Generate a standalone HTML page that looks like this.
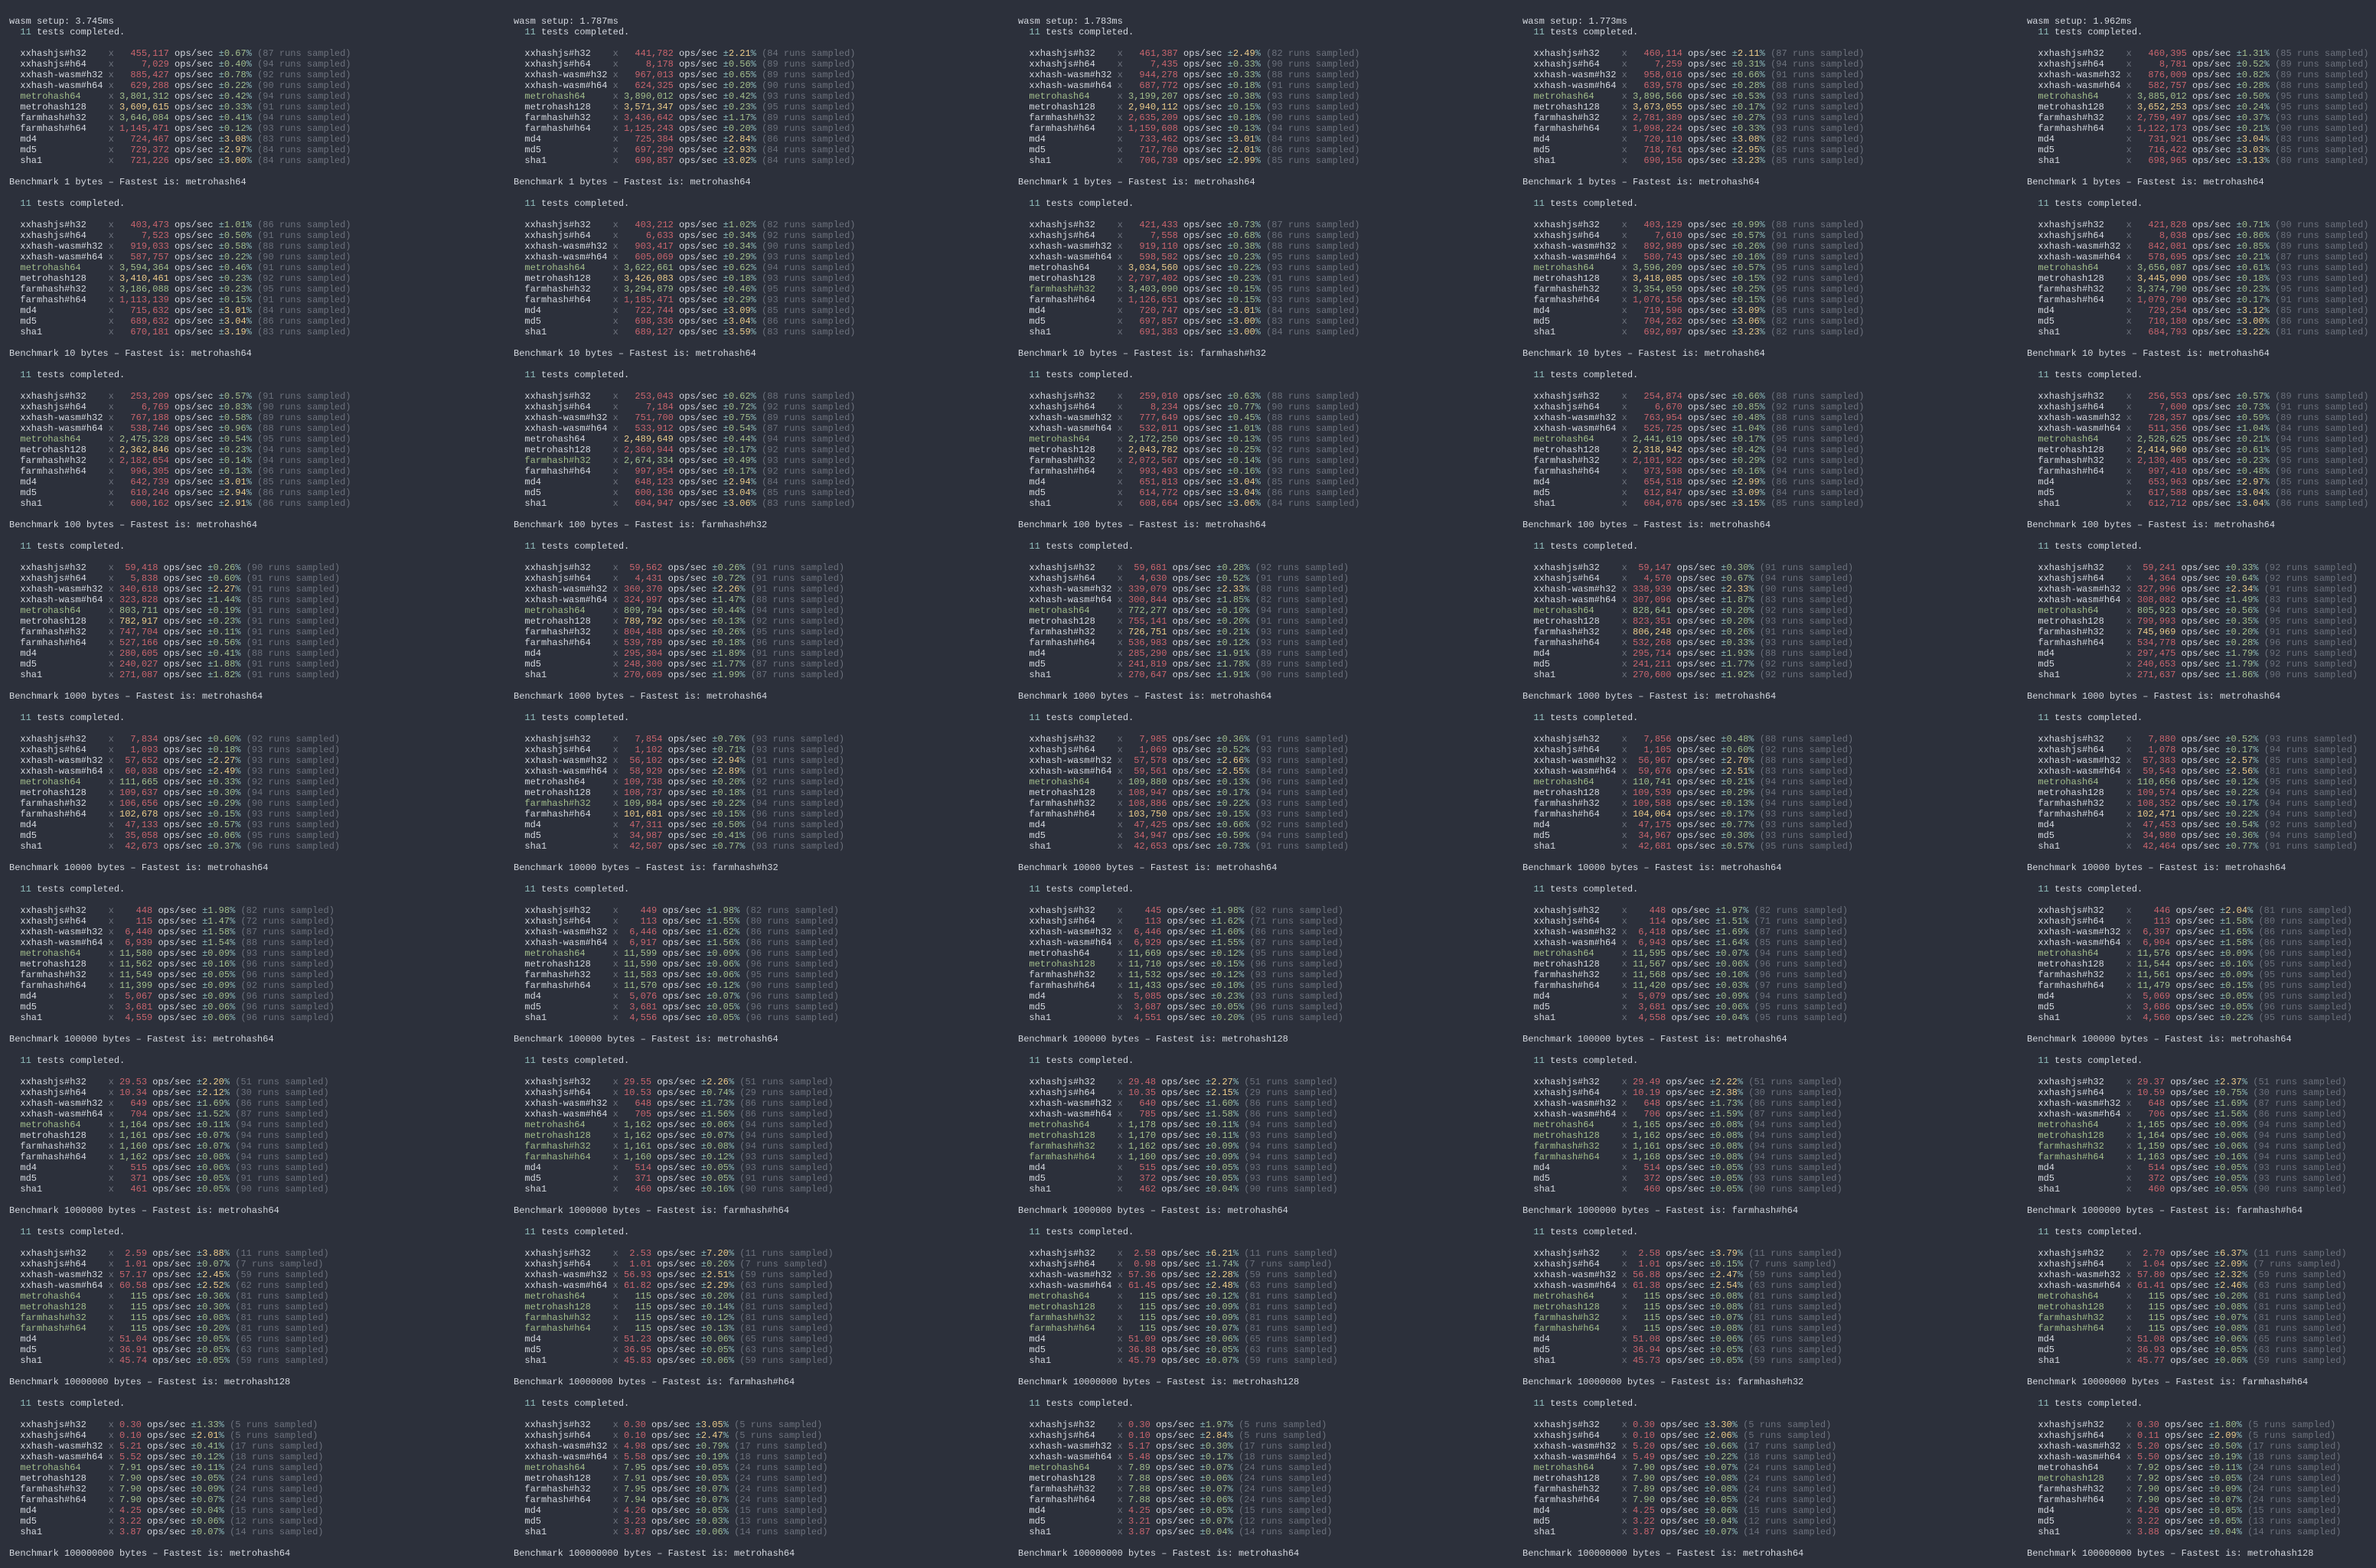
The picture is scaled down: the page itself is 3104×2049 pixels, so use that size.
<!DOCTYPE html>
<html><head><meta charset="utf-8"><style>
html,body{margin:0;padding:0;background:#2c303b;width:3104px;height:2049px;overflow:hidden}
pre{position:absolute;top:21px;margin:0;font:12px/14px "Liberation Mono",monospace;color:#d4d8df;white-space:pre}
i{font-style:normal;color:#6c717c}
u{text-decoration:none;color:#88b4b8}
r{color:#c8646d}
g{color:#a3be8c}
y{color:#ebcb8b}
c{color:#8fbcbb}
</style></head><body>
<pre style="left:12px">wasm setup: 3.745ms
  <c>11</c> tests completed.

  xxhashjs#h32    <i>x</i> <r>  455,117</r> ops/sec <u>±</u><g>0.67</g><u>%</u> <i>(87 runs sampled)</i>
  xxhashjs#h64    <i>x</i> <r>    7,029</r> ops/sec <u>±</u><g>0.40</g><u>%</u> <i>(94 runs sampled)</i>
  xxhash-wasm#h32 <i>x</i> <r>  885,427</r> ops/sec <u>±</u><g>0.78</g><u>%</u> <i>(92 runs sampled)</i>
  xxhash-wasm#h64 <i>x</i> <r>  629,288</r> ops/sec <u>±</u><g>0.22</g><u>%</u> <i>(90 runs sampled)</i>
  <g>metrohash64</g>     <i>x</i> <g>3,801,312</g> ops/sec <u>±</u><g>0.42</g><u>%</u> <i>(94 runs sampled)</i>
  metrohash128    <i>x</i> <y>3,609,615</y> ops/sec <u>±</u><g>0.33</g><u>%</u> <i>(91 runs sampled)</i>
  farmhash#h32    <i>x</i> <g>3,646,084</g> ops/sec <u>±</u><g>0.41</g><u>%</u> <i>(94 runs sampled)</i>
  farmhash#h64    <i>x</i> <r>1,145,471</r> ops/sec <u>±</u><g>0.12</g><u>%</u> <i>(93 runs sampled)</i>
  md4             <i>x</i> <r>  724,467</r> ops/sec <u>±</u><y>3.08</y><u>%</u> <i>(83 runs sampled)</i>
  md5             <i>x</i> <r>  729,372</r> ops/sec <u>±</u><y>2.97</y><u>%</u> <i>(84 runs sampled)</i>
  sha1            <i>x</i> <r>  721,226</r> ops/sec <u>±</u><y>3.00</y><u>%</u> <i>(84 runs sampled)</i>

Benchmark 1 bytes – Fastest is: metrohash64

  <c>11</c> tests completed.

  xxhashjs#h32    <i>x</i> <r>  403,473</r> ops/sec <u>±</u><g>1.01</g><u>%</u> <i>(86 runs sampled)</i>
  xxhashjs#h64    <i>x</i> <r>    7,523</r> ops/sec <u>±</u><g>0.50</g><u>%</u> <i>(91 runs sampled)</i>
  xxhash-wasm#h32 <i>x</i> <r>  919,033</r> ops/sec <u>±</u><g>0.58</g><u>%</u> <i>(88 runs sampled)</i>
  xxhash-wasm#h64 <i>x</i> <r>  587,757</r> ops/sec <u>±</u><g>0.22</g><u>%</u> <i>(90 runs sampled)</i>
  <g>metrohash64</g>     <i>x</i> <g>3,594,364</g> ops/sec <u>±</u><g>0.46</g><u>%</u> <i>(91 runs sampled)</i>
  metrohash128    <i>x</i> <y>3,410,461</y> ops/sec <u>±</u><g>0.23</g><u>%</u> <i>(92 runs sampled)</i>
  farmhash#h32    <i>x</i> <g>3,186,088</g> ops/sec <u>±</u><g>0.23</g><u>%</u> <i>(95 runs sampled)</i>
  farmhash#h64    <i>x</i> <r>1,113,139</r> ops/sec <u>±</u><g>0.15</g><u>%</u> <i>(91 runs sampled)</i>
  md4             <i>x</i> <r>  715,632</r> ops/sec <u>±</u><y>3.01</y><u>%</u> <i>(84 runs sampled)</i>
  md5             <i>x</i> <r>  689,632</r> ops/sec <u>±</u><y>3.04</y><u>%</u> <i>(86 runs sampled)</i>
  sha1            <i>x</i> <r>  670,181</r> ops/sec <u>±</u><y>3.19</y><u>%</u> <i>(83 runs sampled)</i>

Benchmark 10 bytes – Fastest is: metrohash64

  <c>11</c> tests completed.

  xxhashjs#h32    <i>x</i> <r>  253,209</r> ops/sec <u>±</u><g>0.57</g><u>%</u> <i>(91 runs sampled)</i>
  xxhashjs#h64    <i>x</i> <r>    6,769</r> ops/sec <u>±</u><g>0.83</g><u>%</u> <i>(90 runs sampled)</i>
  xxhash-wasm#h32 <i>x</i> <r>  767,188</r> ops/sec <u>±</u><g>0.58</g><u>%</u> <i>(89 runs sampled)</i>
  xxhash-wasm#h64 <i>x</i> <r>  538,746</r> ops/sec <u>±</u><g>0.96</g><u>%</u> <i>(88 runs sampled)</i>
  <g>metrohash64</g>     <i>x</i> <g>2,475,328</g> ops/sec <u>±</u><g>0.54</g><u>%</u> <i>(95 runs sampled)</i>
  metrohash128    <i>x</i> <y>2,362,846</y> ops/sec <u>±</u><g>0.23</g><u>%</u> <i>(94 runs sampled)</i>
  farmhash#h32    <i>x</i> <r>2,182,654</r> ops/sec <u>±</u><g>0.14</g><u>%</u> <i>(94 runs sampled)</i>
  farmhash#h64    <i>x</i> <r>  996,305</r> ops/sec <u>±</u><g>0.13</g><u>%</u> <i>(96 runs sampled)</i>
  md4             <i>x</i> <r>  642,739</r> ops/sec <u>±</u><y>3.01</y><u>%</u> <i>(85 runs sampled)</i>
  md5             <i>x</i> <r>  610,246</r> ops/sec <u>±</u><y>2.94</y><u>%</u> <i>(86 runs sampled)</i>
  sha1            <i>x</i> <r>  600,162</r> ops/sec <u>±</u><y>2.91</y><u>%</u> <i>(86 runs sampled)</i>

Benchmark 100 bytes – Fastest is: metrohash64

  <c>11</c> tests completed.

  xxhashjs#h32    <i>x</i> <r> 59,418</r> ops/sec <u>±</u><g>0.26</g><u>%</u> <i>(90 runs sampled)</i>
  xxhashjs#h64    <i>x</i> <r>  5,838</r> ops/sec <u>±</u><g>0.60</g><u>%</u> <i>(91 runs sampled)</i>
  xxhash-wasm#h32 <i>x</i> <r>340,618</r> ops/sec <u>±</u><y>2.27</y><u>%</u> <i>(91 runs sampled)</i>
  xxhash-wasm#h64 <i>x</i> <r>323,828</r> ops/sec <u>±</u><g>1.44</g><u>%</u> <i>(85 runs sampled)</i>
  <g>metrohash64</g>     <i>x</i> <g>803,711</g> ops/sec <u>±</u><g>0.19</g><u>%</u> <i>(91 runs sampled)</i>
  metrohash128    <i>x</i> <y>782,917</y> ops/sec <u>±</u><g>0.23</g><u>%</u> <i>(91 runs sampled)</i>
  farmhash#h32    <i>x</i> <r>747,704</r> ops/sec <u>±</u><g>0.11</g><u>%</u> <i>(91 runs sampled)</i>
  farmhash#h64    <i>x</i> <r>527,166</r> ops/sec <u>±</u><g>0.56</g><u>%</u> <i>(91 runs sampled)</i>
  md4             <i>x</i> <r>280,605</r> ops/sec <u>±</u><g>0.41</g><u>%</u> <i>(88 runs sampled)</i>
  md5             <i>x</i> <r>240,027</r> ops/sec <u>±</u><g>1.88</g><u>%</u> <i>(91 runs sampled)</i>
  sha1            <i>x</i> <r>271,087</r> ops/sec <u>±</u><g>1.82</g><u>%</u> <i>(91 runs sampled)</i>

Benchmark 1000 bytes – Fastest is: metrohash64

  <c>11</c> tests completed.

  xxhashjs#h32    <i>x</i> <r>  7,834</r> ops/sec <u>±</u><g>0.60</g><u>%</u> <i>(92 runs sampled)</i>
  xxhashjs#h64    <i>x</i> <r>  1,093</r> ops/sec <u>±</u><g>0.18</g><u>%</u> <i>(93 runs sampled)</i>
  xxhash-wasm#h32 <i>x</i> <r> 57,652</r> ops/sec <u>±</u><y>2.27</y><u>%</u> <i>(93 runs sampled)</i>
  xxhash-wasm#h64 <i>x</i> <r> 60,038</r> ops/sec <u>±</u><y>2.49</y><u>%</u> <i>(93 runs sampled)</i>
  <g>metrohash64</g>     <i>x</i> <g>111,665</g> ops/sec <u>±</u><g>0.33</g><u>%</u> <i>(92 runs sampled)</i>
  metrohash128    <i>x</i> <r>109,637</r> ops/sec <u>±</u><g>0.30</g><u>%</u> <i>(94 runs sampled)</i>
  farmhash#h32    <i>x</i> <r>106,656</r> ops/sec <u>±</u><g>0.29</g><u>%</u> <i>(90 runs sampled)</i>
  farmhash#h64    <i>x</i> <y>102,678</y> ops/sec <u>±</u><g>0.15</g><u>%</u> <i>(93 runs sampled)</i>
  md4             <i>x</i> <r> 47,133</r> ops/sec <u>±</u><g>0.57</g><u>%</u> <i>(93 runs sampled)</i>
  md5             <i>x</i> <r> 35,058</r> ops/sec <u>±</u><g>0.06</g><u>%</u> <i>(95 runs sampled)</i>
  sha1            <i>x</i> <r> 42,673</r> ops/sec <u>±</u><g>0.37</g><u>%</u> <i>(96 runs sampled)</i>

Benchmark 10000 bytes – Fastest is: metrohash64

  <c>11</c> tests completed.

  xxhashjs#h32    <i>x</i> <r>   448</r> ops/sec <u>±</u><g>1.98</g><u>%</u> <i>(82 runs sampled)</i>
  xxhashjs#h64    <i>x</i> <r>   115</r> ops/sec <u>±</u><g>1.47</g><u>%</u> <i>(72 runs sampled)</i>
  xxhash-wasm#h32 <i>x</i> <r> 6,440</r> ops/sec <u>±</u><g>1.58</g><u>%</u> <i>(87 runs sampled)</i>
  xxhash-wasm#h64 <i>x</i> <r> 6,939</r> ops/sec <u>±</u><g>1.54</g><u>%</u> <i>(88 runs sampled)</i>
  <g>metrohash64</g>     <i>x</i> <g>11,580</g> ops/sec <u>±</u><g>0.09</g><u>%</u> <i>(93 runs sampled)</i>
  metrohash128    <i>x</i> <g>11,562</g> ops/sec <u>±</u><g>0.16</g><u>%</u> <i>(96 runs sampled)</i>
  farmhash#h32    <i>x</i> <g>11,549</g> ops/sec <u>±</u><g>0.05</g><u>%</u> <i>(96 runs sampled)</i>
  farmhash#h64    <i>x</i> <g>11,399</g> ops/sec <u>±</u><g>0.09</g><u>%</u> <i>(92 runs sampled)</i>
  md4             <i>x</i> <r> 5,067</r> ops/sec <u>±</u><g>0.09</g><u>%</u> <i>(96 runs sampled)</i>
  md5             <i>x</i> <r> 3,681</r> ops/sec <u>±</u><g>0.06</g><u>%</u> <i>(96 runs sampled)</i>
  sha1            <i>x</i> <r> 4,559</r> ops/sec <u>±</u><g>0.06</g><u>%</u> <i>(96 runs sampled)</i>

Benchmark 100000 bytes – Fastest is: metrohash64

  <c>11</c> tests completed.

  xxhashjs#h32    <i>x</i> <r>29.53</r> ops/sec <u>±</u><y>2.20</y><u>%</u> <i>(51 runs sampled)</i>
  xxhashjs#h64    <i>x</i> <r>10.34</r> ops/sec <u>±</u><y>2.12</y><u>%</u> <i>(30 runs sampled)</i>
  xxhash-wasm#h32 <i>x</i> <r>  649</r> ops/sec <u>±</u><g>1.69</g><u>%</u> <i>(86 runs sampled)</i>
  xxhash-wasm#h64 <i>x</i> <r>  704</r> ops/sec <u>±</u><g>1.52</g><u>%</u> <i>(87 runs sampled)</i>
  <g>metrohash64</g>     <i>x</i> <g>1,164</g> ops/sec <u>±</u><g>0.11</g><u>%</u> <i>(94 runs sampled)</i>
  metrohash128    <i>x</i> <g>1,161</g> ops/sec <u>±</u><g>0.07</g><u>%</u> <i>(94 runs sampled)</i>
  farmhash#h32    <i>x</i> <g>1,160</g> ops/sec <u>±</u><g>0.07</g><u>%</u> <i>(94 runs sampled)</i>
  farmhash#h64    <i>x</i> <g>1,162</g> ops/sec <u>±</u><g>0.08</g><u>%</u> <i>(94 runs sampled)</i>
  md4             <i>x</i> <r>  515</r> ops/sec <u>±</u><g>0.06</g><u>%</u> <i>(93 runs sampled)</i>
  md5             <i>x</i> <r>  371</r> ops/sec <u>±</u><g>0.05</g><u>%</u> <i>(91 runs sampled)</i>
  sha1            <i>x</i> <r>  461</r> ops/sec <u>±</u><g>0.05</g><u>%</u> <i>(90 runs sampled)</i>

Benchmark 1000000 bytes – Fastest is: metrohash64

  <c>11</c> tests completed.

  xxhashjs#h32    <i>x</i> <r> 2.59</r> ops/sec <u>±</u><y>3.88</y><u>%</u> <i>(11 runs sampled)</i>
  xxhashjs#h64    <i>x</i> <r> 1.01</r> ops/sec <u>±</u><g>0.07</g><u>%</u> <i>(7 runs sampled)</i>
  xxhash-wasm#h32 <i>x</i> <r>57.17</r> ops/sec <u>±</u><y>2.45</y><u>%</u> <i>(59 runs sampled)</i>
  xxhash-wasm#h64 <i>x</i> <r>60.58</r> ops/sec <u>±</u><y>2.52</y><u>%</u> <i>(62 runs sampled)</i>
  <g>metrohash64</g>     <i>x</i> <g>  115</g> ops/sec <u>±</u><g>0.36</g><u>%</u> <i>(81 runs sampled)</i>
  <g>metrohash128</g>    <i>x</i> <g>  115</g> ops/sec <u>±</u><g>0.30</g><u>%</u> <i>(81 runs sampled)</i>
  <g>farmhash#h32</g>    <i>x</i> <g>  115</g> ops/sec <u>±</u><g>0.08</g><u>%</u> <i>(81 runs sampled)</i>
  <g>farmhash#h64</g>    <i>x</i> <g>  115</g> ops/sec <u>±</u><g>0.20</g><u>%</u> <i>(81 runs sampled)</i>
  md4             <i>x</i> <r>51.04</r> ops/sec <u>±</u><g>0.05</g><u>%</u> <i>(65 runs sampled)</i>
  md5             <i>x</i> <r>36.91</r> ops/sec <u>±</u><g>0.05</g><u>%</u> <i>(63 runs sampled)</i>
  sha1            <i>x</i> <r>45.74</r> ops/sec <u>±</u><g>0.05</g><u>%</u> <i>(59 runs sampled)</i>

Benchmark 10000000 bytes – Fastest is: metrohash128

  <c>11</c> tests completed.

  xxhashjs#h32    <i>x</i> <r>0.30</r> ops/sec <u>±</u><g>1.33</g><u>%</u> <i>(5 runs sampled)</i>
  xxhashjs#h64    <i>x</i> <r>0.10</r> ops/sec <u>±</u><y>2.01</y><u>%</u> <i>(5 runs sampled)</i>
  xxhash-wasm#h32 <i>x</i> <r>5.21</r> ops/sec <u>±</u><g>0.41</g><u>%</u> <i>(17 runs sampled)</i>
  xxhash-wasm#h64 <i>x</i> <r>5.52</r> ops/sec <u>±</u><g>0.12</g><u>%</u> <i>(18 runs sampled)</i>
  <g>metrohash64</g>     <i>x</i> <g>7.91</g> ops/sec <u>±</u><g>0.11</g><u>%</u> <i>(24 runs sampled)</i>
  metrohash128    <i>x</i> <g>7.90</g> ops/sec <u>±</u><g>0.05</g><u>%</u> <i>(24 runs sampled)</i>
  farmhash#h32    <i>x</i> <g>7.90</g> ops/sec <u>±</u><g>0.09</g><u>%</u> <i>(24 runs sampled)</i>
  farmhash#h64    <i>x</i> <g>7.90</g> ops/sec <u>±</u><g>0.07</g><u>%</u> <i>(24 runs sampled)</i>
  md4             <i>x</i> <r>4.25</r> ops/sec <u>±</u><g>0.04</g><u>%</u> <i>(15 runs sampled)</i>
  md5             <i>x</i> <r>3.22</r> ops/sec <u>±</u><g>0.06</g><u>%</u> <i>(12 runs sampled)</i>
  sha1            <i>x</i> <r>3.87</r> ops/sec <u>±</u><g>0.07</g><u>%</u> <i>(14 runs sampled)</i>

Benchmark 100000000 bytes – Fastest is: metrohash64</pre>
<pre style="left:671px">wasm setup: 1.787ms
  <c>11</c> tests completed.

  xxhashjs#h32    <i>x</i> <r>  441,782</r> ops/sec <u>±</u><y>2.21</y><u>%</u> <i>(84 runs sampled)</i>
  xxhashjs#h64    <i>x</i> <r>    8,178</r> ops/sec <u>±</u><g>0.56</g><u>%</u> <i>(89 runs sampled)</i>
  xxhash-wasm#h32 <i>x</i> <r>  967,013</r> ops/sec <u>±</u><g>0.65</g><u>%</u> <i>(89 runs sampled)</i>
  xxhash-wasm#h64 <i>x</i> <r>  624,325</r> ops/sec <u>±</u><g>0.20</g><u>%</u> <i>(90 runs sampled)</i>
  <g>metrohash64</g>     <i>x</i> <g>3,890,012</g> ops/sec <u>±</u><g>0.42</g><u>%</u> <i>(93 runs sampled)</i>
  metrohash128    <i>x</i> <y>3,571,347</y> ops/sec <u>±</u><g>0.23</g><u>%</u> <i>(95 runs sampled)</i>
  farmhash#h32    <i>x</i> <r>3,436,642</r> ops/sec <u>±</u><g>1.17</g><u>%</u> <i>(89 runs sampled)</i>
  farmhash#h64    <i>x</i> <r>1,125,243</r> ops/sec <u>±</u><g>0.20</g><u>%</u> <i>(89 runs sampled)</i>
  md4             <i>x</i> <r>  725,384</r> ops/sec <u>±</u><y>2.84</y><u>%</u> <i>(86 runs sampled)</i>
  md5             <i>x</i> <r>  697,290</r> ops/sec <u>±</u><y>2.93</y><u>%</u> <i>(84 runs sampled)</i>
  sha1            <i>x</i> <r>  690,857</r> ops/sec <u>±</u><y>3.02</y><u>%</u> <i>(84 runs sampled)</i>

Benchmark 1 bytes – Fastest is: metrohash64

  <c>11</c> tests completed.

  xxhashjs#h32    <i>x</i> <r>  403,212</r> ops/sec <u>±</u><g>1.02</g><u>%</u> <i>(82 runs sampled)</i>
  xxhashjs#h64    <i>x</i> <r>    6,633</r> ops/sec <u>±</u><g>0.34</g><u>%</u> <i>(92 runs sampled)</i>
  xxhash-wasm#h32 <i>x</i> <r>  903,417</r> ops/sec <u>±</u><g>0.34</g><u>%</u> <i>(90 runs sampled)</i>
  xxhash-wasm#h64 <i>x</i> <r>  605,069</r> ops/sec <u>±</u><g>0.29</g><u>%</u> <i>(93 runs sampled)</i>
  <g>metrohash64</g>     <i>x</i> <g>3,622,661</g> ops/sec <u>±</u><g>0.62</g><u>%</u> <i>(94 runs sampled)</i>
  metrohash128    <i>x</i> <y>3,426,083</y> ops/sec <u>±</u><g>0.18</g><u>%</u> <i>(93 runs sampled)</i>
  farmhash#h32    <i>x</i> <g>3,294,879</g> ops/sec <u>±</u><g>0.46</g><u>%</u> <i>(95 runs sampled)</i>
  farmhash#h64    <i>x</i> <r>1,185,471</r> ops/sec <u>±</u><g>0.29</g><u>%</u> <i>(93 runs sampled)</i>
  md4             <i>x</i> <r>  722,744</r> ops/sec <u>±</u><y>3.09</y><u>%</u> <i>(85 runs sampled)</i>
  md5             <i>x</i> <r>  698,336</r> ops/sec <u>±</u><y>3.04</y><u>%</u> <i>(86 runs sampled)</i>
  sha1            <i>x</i> <r>  689,127</r> ops/sec <u>±</u><y>3.59</y><u>%</u> <i>(83 runs sampled)</i>

Benchmark 10 bytes – Fastest is: metrohash64

  <c>11</c> tests completed.

  xxhashjs#h32    <i>x</i> <r>  253,043</r> ops/sec <u>±</u><g>0.62</g><u>%</u> <i>(88 runs sampled)</i>
  xxhashjs#h64    <i>x</i> <r>    7,184</r> ops/sec <u>±</u><g>0.72</g><u>%</u> <i>(92 runs sampled)</i>
  xxhash-wasm#h32 <i>x</i> <r>  751,700</r> ops/sec <u>±</u><g>0.75</g><u>%</u> <i>(89 runs sampled)</i>
  xxhash-wasm#h64 <i>x</i> <r>  533,912</r> ops/sec <u>±</u><g>0.54</g><u>%</u> <i>(87 runs sampled)</i>
  metrohash64     <i>x</i> <y>2,489,649</y> ops/sec <u>±</u><g>0.44</g><u>%</u> <i>(94 runs sampled)</i>
  metrohash128    <i>x</i> <r>2,360,944</r> ops/sec <u>±</u><g>0.17</g><u>%</u> <i>(92 runs sampled)</i>
  <g>farmhash#h32</g>    <i>x</i> <g>2,674,334</g> ops/sec <u>±</u><g>0.49</g><u>%</u> <i>(93 runs sampled)</i>
  farmhash#h64    <i>x</i> <r>  997,954</r> ops/sec <u>±</u><g>0.17</g><u>%</u> <i>(92 runs sampled)</i>
  md4             <i>x</i> <r>  648,123</r> ops/sec <u>±</u><y>2.94</y><u>%</u> <i>(84 runs sampled)</i>
  md5             <i>x</i> <r>  600,136</r> ops/sec <u>±</u><y>3.04</y><u>%</u> <i>(85 runs sampled)</i>
  sha1            <i>x</i> <r>  604,947</r> ops/sec <u>±</u><y>3.06</y><u>%</u> <i>(83 runs sampled)</i>

Benchmark 100 bytes – Fastest is: farmhash#h32

  <c>11</c> tests completed.

  xxhashjs#h32    <i>x</i> <r> 59,562</r> ops/sec <u>±</u><g>0.26</g><u>%</u> <i>(91 runs sampled)</i>
  xxhashjs#h64    <i>x</i> <r>  4,431</r> ops/sec <u>±</u><g>0.72</g><u>%</u> <i>(91 runs sampled)</i>
  xxhash-wasm#h32 <i>x</i> <r>360,370</r> ops/sec <u>±</u><y>2.26</y><u>%</u> <i>(91 runs sampled)</i>
  xxhash-wasm#h64 <i>x</i> <r>324,997</r> ops/sec <u>±</u><g>1.47</g><u>%</u> <i>(88 runs sampled)</i>
  <g>metrohash64</g>     <i>x</i> <g>809,794</g> ops/sec <u>±</u><g>0.44</g><u>%</u> <i>(94 runs sampled)</i>
  metrohash128    <i>x</i> <y>789,792</y> ops/sec <u>±</u><g>0.13</g><u>%</u> <i>(92 runs sampled)</i>
  farmhash#h32    <i>x</i> <r>804,488</r> ops/sec <u>±</u><g>0.26</g><u>%</u> <i>(95 runs sampled)</i>
  farmhash#h64    <i>x</i> <r>539,789</r> ops/sec <u>±</u><g>0.18</g><u>%</u> <i>(96 runs sampled)</i>
  md4             <i>x</i> <r>295,304</r> ops/sec <u>±</u><g>1.89</g><u>%</u> <i>(91 runs sampled)</i>
  md5             <i>x</i> <r>248,300</r> ops/sec <u>±</u><g>1.77</g><u>%</u> <i>(87 runs sampled)</i>
  sha1            <i>x</i> <r>270,609</r> ops/sec <u>±</u><g>1.99</g><u>%</u> <i>(87 runs sampled)</i>

Benchmark 1000 bytes – Fastest is: metrohash64

  <c>11</c> tests completed.

  xxhashjs#h32    <i>x</i> <r>  7,854</r> ops/sec <u>±</u><g>0.76</g><u>%</u> <i>(93 runs sampled)</i>
  xxhashjs#h64    <i>x</i> <r>  1,102</r> ops/sec <u>±</u><g>0.71</g><u>%</u> <i>(93 runs sampled)</i>
  xxhash-wasm#h32 <i>x</i> <r> 56,102</r> ops/sec <u>±</u><y>2.94</y><u>%</u> <i>(91 runs sampled)</i>
  xxhash-wasm#h64 <i>x</i> <r> 58,929</r> ops/sec <u>±</u><y>2.89</y><u>%</u> <i>(91 runs sampled)</i>
  metrohash64     <i>x</i> <r>109,738</r> ops/sec <u>±</u><g>0.20</g><u>%</u> <i>(92 runs sampled)</i>
  metrohash128    <i>x</i> <r>108,737</r> ops/sec <u>±</u><g>0.18</g><u>%</u> <i>(91 runs sampled)</i>
  <g>farmhash#h32</g>    <i>x</i> <g>109,984</g> ops/sec <u>±</u><g>0.22</g><u>%</u> <i>(94 runs sampled)</i>
  farmhash#h64    <i>x</i> <y>101,681</y> ops/sec <u>±</u><g>0.15</g><u>%</u> <i>(96 runs sampled)</i>
  md4             <i>x</i> <r> 47,311</r> ops/sec <u>±</u><g>0.50</g><u>%</u> <i>(94 runs sampled)</i>
  md5             <i>x</i> <r> 34,987</r> ops/sec <u>±</u><g>0.41</g><u>%</u> <i>(96 runs sampled)</i>
  sha1            <i>x</i> <r> 42,507</r> ops/sec <u>±</u><g>0.77</g><u>%</u> <i>(93 runs sampled)</i>

Benchmark 10000 bytes – Fastest is: farmhash#h32

  <c>11</c> tests completed.

  xxhashjs#h32    <i>x</i> <r>   449</r> ops/sec <u>±</u><g>1.98</g><u>%</u> <i>(82 runs sampled)</i>
  xxhashjs#h64    <i>x</i> <r>   113</r> ops/sec <u>±</u><g>1.55</g><u>%</u> <i>(80 runs sampled)</i>
  xxhash-wasm#h32 <i>x</i> <r> 6,446</r> ops/sec <u>±</u><g>1.62</g><u>%</u> <i>(86 runs sampled)</i>
  xxhash-wasm#h64 <i>x</i> <r> 6,917</r> ops/sec <u>±</u><g>1.56</g><u>%</u> <i>(86 runs sampled)</i>
  <g>metrohash64</g>     <i>x</i> <g>11,599</g> ops/sec <u>±</u><g>0.09</g><u>%</u> <i>(96 runs sampled)</i>
  metrohash128    <i>x</i> <g>11,590</g> ops/sec <u>±</u><g>0.06</g><u>%</u> <i>(96 runs sampled)</i>
  farmhash#h32    <i>x</i> <g>11,583</g> ops/sec <u>±</u><g>0.06</g><u>%</u> <i>(95 runs sampled)</i>
  farmhash#h64    <i>x</i> <g>11,570</g> ops/sec <u>±</u><g>0.12</g><u>%</u> <i>(90 runs sampled)</i>
  md4             <i>x</i> <r> 5,076</r> ops/sec <u>±</u><g>0.07</g><u>%</u> <i>(96 runs sampled)</i>
  md5             <i>x</i> <r> 3,681</r> ops/sec <u>±</u><g>0.05</g><u>%</u> <i>(96 runs sampled)</i>
  sha1            <i>x</i> <r> 4,556</r> ops/sec <u>±</u><g>0.05</g><u>%</u> <i>(96 runs sampled)</i>

Benchmark 100000 bytes – Fastest is: metrohash64

  <c>11</c> tests completed.

  xxhashjs#h32    <i>x</i> <r>29.55</r> ops/sec <u>±</u><y>2.26</y><u>%</u> <i>(51 runs sampled)</i>
  xxhashjs#h64    <i>x</i> <r>10.53</r> ops/sec <u>±</u><g>0.74</g><u>%</u> <i>(29 runs sampled)</i>
  xxhash-wasm#h32 <i>x</i> <r>  648</r> ops/sec <u>±</u><g>1.73</g><u>%</u> <i>(86 runs sampled)</i>
  xxhash-wasm#h64 <i>x</i> <r>  705</r> ops/sec <u>±</u><g>1.56</g><u>%</u> <i>(86 runs sampled)</i>
  <g>metrohash64</g>     <i>x</i> <g>1,162</g> ops/sec <u>±</u><g>0.06</g><u>%</u> <i>(94 runs sampled)</i>
  <g>metrohash128</g>    <i>x</i> <g>1,162</g> ops/sec <u>±</u><g>0.07</g><u>%</u> <i>(94 runs sampled)</i>
  <g>farmhash#h32</g>    <i>x</i> <g>1,161</g> ops/sec <u>±</u><g>0.08</g><u>%</u> <i>(94 runs sampled)</i>
  <g>farmhash#h64</g>    <i>x</i> <g>1,160</g> ops/sec <u>±</u><g>0.12</g><u>%</u> <i>(93 runs sampled)</i>
  md4             <i>x</i> <r>  514</r> ops/sec <u>±</u><g>0.05</g><u>%</u> <i>(93 runs sampled)</i>
  md5             <i>x</i> <r>  371</r> ops/sec <u>±</u><g>0.05</g><u>%</u> <i>(91 runs sampled)</i>
  sha1            <i>x</i> <r>  460</r> ops/sec <u>±</u><g>0.16</g><u>%</u> <i>(90 runs sampled)</i>

Benchmark 1000000 bytes – Fastest is: farmhash#h64

  <c>11</c> tests completed.

  xxhashjs#h32    <i>x</i> <r> 2.53</r> ops/sec <u>±</u><y>7.20</y><u>%</u> <i>(11 runs sampled)</i>
  xxhashjs#h64    <i>x</i> <r> 1.01</r> ops/sec <u>±</u><g>0.26</g><u>%</u> <i>(7 runs sampled)</i>
  xxhash-wasm#h32 <i>x</i> <r>56.93</r> ops/sec <u>±</u><y>2.51</y><u>%</u> <i>(59 runs sampled)</i>
  xxhash-wasm#h64 <i>x</i> <r>61.82</r> ops/sec <u>±</u><y>2.29</y><u>%</u> <i>(63 runs sampled)</i>
  <g>metrohash64</g>     <i>x</i> <g>  115</g> ops/sec <u>±</u><g>0.20</g><u>%</u> <i>(81 runs sampled)</i>
  <g>metrohash128</g>    <i>x</i> <g>  115</g> ops/sec <u>±</u><g>0.14</g><u>%</u> <i>(81 runs sampled)</i>
  <g>farmhash#h32</g>    <i>x</i> <g>  115</g> ops/sec <u>±</u><g>0.12</g><u>%</u> <i>(81 runs sampled)</i>
  <g>farmhash#h64</g>    <i>x</i> <g>  115</g> ops/sec <u>±</u><g>0.13</g><u>%</u> <i>(81 runs sampled)</i>
  md4             <i>x</i> <r>51.23</r> ops/sec <u>±</u><g>0.06</g><u>%</u> <i>(65 runs sampled)</i>
  md5             <i>x</i> <r>36.95</r> ops/sec <u>±</u><g>0.05</g><u>%</u> <i>(63 runs sampled)</i>
  sha1            <i>x</i> <r>45.83</r> ops/sec <u>±</u><g>0.06</g><u>%</u> <i>(59 runs sampled)</i>

Benchmark 10000000 bytes – Fastest is: farmhash#h64

  <c>11</c> tests completed.

  xxhashjs#h32    <i>x</i> <r>0.30</r> ops/sec <u>±</u><y>3.05</y><u>%</u> <i>(5 runs sampled)</i>
  xxhashjs#h64    <i>x</i> <r>0.10</r> ops/sec <u>±</u><y>2.47</y><u>%</u> <i>(5 runs sampled)</i>
  xxhash-wasm#h32 <i>x</i> <r>4.98</r> ops/sec <u>±</u><g>0.79</g><u>%</u> <i>(17 runs sampled)</i>
  xxhash-wasm#h64 <i>x</i> <r>5.58</r> ops/sec <u>±</u><g>0.19</g><u>%</u> <i>(18 runs sampled)</i>
  <g>metrohash64</g>     <i>x</i> <g>7.95</g> ops/sec <u>±</u><g>0.05</g><u>%</u> <i>(24 runs sampled)</i>
  metrohash128    <i>x</i> <g>7.91</g> ops/sec <u>±</u><g>0.05</g><u>%</u> <i>(24 runs sampled)</i>
  farmhash#h32    <i>x</i> <g>7.95</g> ops/sec <u>±</u><g>0.07</g><u>%</u> <i>(24 runs sampled)</i>
  farmhash#h64    <i>x</i> <g>7.94</g> ops/sec <u>±</u><g>0.07</g><u>%</u> <i>(24 runs sampled)</i>
  md4             <i>x</i> <r>4.26</r> ops/sec <u>±</u><g>0.05</g><u>%</u> <i>(15 runs sampled)</i>
  md5             <i>x</i> <r>3.23</r> ops/sec <u>±</u><g>0.03</g><u>%</u> <i>(13 runs sampled)</i>
  sha1            <i>x</i> <r>3.87</r> ops/sec <u>±</u><g>0.06</g><u>%</u> <i>(14 runs sampled)</i>

Benchmark 100000000 bytes – Fastest is: metrohash64</pre>
<pre style="left:1330px">wasm setup: 1.783ms
  <c>11</c> tests completed.

  xxhashjs#h32    <i>x</i> <r>  461,387</r> ops/sec <u>±</u><y>2.49</y><u>%</u> <i>(82 runs sampled)</i>
  xxhashjs#h64    <i>x</i> <r>    7,435</r> ops/sec <u>±</u><g>0.33</g><u>%</u> <i>(90 runs sampled)</i>
  xxhash-wasm#h32 <i>x</i> <r>  944,278</r> ops/sec <u>±</u><g>0.33</g><u>%</u> <i>(88 runs sampled)</i>
  xxhash-wasm#h64 <i>x</i> <r>  687,772</r> ops/sec <u>±</u><g>0.18</g><u>%</u> <i>(91 runs sampled)</i>
  <g>metrohash64</g>     <i>x</i> <g>3,199,207</g> ops/sec <u>±</u><g>0.38</g><u>%</u> <i>(93 runs sampled)</i>
  metrohash128    <i>x</i> <y>2,940,112</y> ops/sec <u>±</u><g>0.15</g><u>%</u> <i>(93 runs sampled)</i>
  farmhash#h32    <i>x</i> <r>2,635,209</r> ops/sec <u>±</u><g>0.18</g><u>%</u> <i>(90 runs sampled)</i>
  farmhash#h64    <i>x</i> <r>1,159,608</r> ops/sec <u>±</u><g>0.13</g><u>%</u> <i>(94 runs sampled)</i>
  md4             <i>x</i> <r>  733,462</r> ops/sec <u>±</u><y>3.01</y><u>%</u> <i>(84 runs sampled)</i>
  md5             <i>x</i> <r>  717,760</r> ops/sec <u>±</u><y>2.01</y><u>%</u> <i>(86 runs sampled)</i>
  sha1            <i>x</i> <r>  706,739</r> ops/sec <u>±</u><y>2.99</y><u>%</u> <i>(85 runs sampled)</i>

Benchmark 1 bytes – Fastest is: metrohash64

  <c>11</c> tests completed.

  xxhashjs#h32    <i>x</i> <r>  421,433</r> ops/sec <u>±</u><g>0.73</g><u>%</u> <i>(87 runs sampled)</i>
  xxhashjs#h64    <i>x</i> <r>    7,558</r> ops/sec <u>±</u><g>0.68</g><u>%</u> <i>(86 runs sampled)</i>
  xxhash-wasm#h32 <i>x</i> <r>  919,110</r> ops/sec <u>±</u><g>0.38</g><u>%</u> <i>(88 runs sampled)</i>
  xxhash-wasm#h64 <i>x</i> <r>  598,582</r> ops/sec <u>±</u><g>0.23</g><u>%</u> <i>(95 runs sampled)</i>
  metrohash64     <i>x</i> <y>3,034,560</y> ops/sec <u>±</u><g>0.22</g><u>%</u> <i>(93 runs sampled)</i>
  metrohash128    <i>x</i> <r>2,797,402</r> ops/sec <u>±</u><g>0.23</g><u>%</u> <i>(91 runs sampled)</i>
  <g>farmhash#h32</g>    <i>x</i> <g>3,403,090</g> ops/sec <u>±</u><g>0.15</g><u>%</u> <i>(95 runs sampled)</i>
  farmhash#h64    <i>x</i> <r>1,126,651</r> ops/sec <u>±</u><g>0.15</g><u>%</u> <i>(93 runs sampled)</i>
  md4             <i>x</i> <r>  720,747</r> ops/sec <u>±</u><y>3.01</y><u>%</u> <i>(84 runs sampled)</i>
  md5             <i>x</i> <r>  697,857</r> ops/sec <u>±</u><y>3.00</y><u>%</u> <i>(83 runs sampled)</i>
  sha1            <i>x</i> <r>  691,383</r> ops/sec <u>±</u><y>3.00</y><u>%</u> <i>(84 runs sampled)</i>

Benchmark 10 bytes – Fastest is: farmhash#h32

  <c>11</c> tests completed.

  xxhashjs#h32    <i>x</i> <r>  259,010</r> ops/sec <u>±</u><g>0.63</g><u>%</u> <i>(88 runs sampled)</i>
  xxhashjs#h64    <i>x</i> <r>    8,234</r> ops/sec <u>±</u><g>0.77</g><u>%</u> <i>(90 runs sampled)</i>
  xxhash-wasm#h32 <i>x</i> <r>  777,649</r> ops/sec <u>±</u><g>0.45</g><u>%</u> <i>(88 runs sampled)</i>
  xxhash-wasm#h64 <i>x</i> <r>  532,011</r> ops/sec <u>±</u><g>1.01</g><u>%</u> <i>(88 runs sampled)</i>
  <g>metrohash64</g>     <i>x</i> <g>2,172,250</g> ops/sec <u>±</u><g>0.13</g><u>%</u> <i>(95 runs sampled)</i>
  metrohash128    <i>x</i> <y>2,043,782</y> ops/sec <u>±</u><g>0.25</g><u>%</u> <i>(92 runs sampled)</i>
  farmhash#h32    <i>x</i> <r>2,072,567</r> ops/sec <u>±</u><g>0.14</g><u>%</u> <i>(96 runs sampled)</i>
  farmhash#h64    <i>x</i> <r>  993,493</r> ops/sec <u>±</u><g>0.16</g><u>%</u> <i>(93 runs sampled)</i>
  md4             <i>x</i> <r>  651,813</r> ops/sec <u>±</u><y>3.04</y><u>%</u> <i>(85 runs sampled)</i>
  md5             <i>x</i> <r>  614,772</r> ops/sec <u>±</u><y>3.04</y><u>%</u> <i>(86 runs sampled)</i>
  sha1            <i>x</i> <r>  608,664</r> ops/sec <u>±</u><y>3.06</y><u>%</u> <i>(84 runs sampled)</i>

Benchmark 100 bytes – Fastest is: metrohash64

  <c>11</c> tests completed.

  xxhashjs#h32    <i>x</i> <r> 59,681</r> ops/sec <u>±</u><g>0.28</g><u>%</u> <i>(92 runs sampled)</i>
  xxhashjs#h64    <i>x</i> <r>  4,630</r> ops/sec <u>±</u><g>0.52</g><u>%</u> <i>(91 runs sampled)</i>
  xxhash-wasm#h32 <i>x</i> <r>339,079</r> ops/sec <u>±</u><y>2.33</y><u>%</u> <i>(88 runs sampled)</i>
  xxhash-wasm#h64 <i>x</i> <r>300,844</r> ops/sec <u>±</u><g>1.85</g><u>%</u> <i>(82 runs sampled)</i>
  <g>metrohash64</g>     <i>x</i> <g>772,277</g> ops/sec <u>±</u><g>0.10</g><u>%</u> <i>(94 runs sampled)</i>
  metrohash128    <i>x</i> <r>755,141</r> ops/sec <u>±</u><g>0.20</g><u>%</u> <i>(91 runs sampled)</i>
  farmhash#h32    <i>x</i> <y>726,751</y> ops/sec <u>±</u><g>0.21</g><u>%</u> <i>(93 runs sampled)</i>
  farmhash#h64    <i>x</i> <r>536,983</r> ops/sec <u>±</u><g>0.12</g><u>%</u> <i>(93 runs sampled)</i>
  md4             <i>x</i> <r>285,290</r> ops/sec <u>±</u><g>1.91</g><u>%</u> <i>(89 runs sampled)</i>
  md5             <i>x</i> <r>241,819</r> ops/sec <u>±</u><g>1.78</g><u>%</u> <i>(89 runs sampled)</i>
  sha1            <i>x</i> <r>270,647</r> ops/sec <u>±</u><g>1.91</g><u>%</u> <i>(90 runs sampled)</i>

Benchmark 1000 bytes – Fastest is: metrohash64

  <c>11</c> tests completed.

  xxhashjs#h32    <i>x</i> <r>  7,985</r> ops/sec <u>±</u><g>0.36</g><u>%</u> <i>(91 runs sampled)</i>
  xxhashjs#h64    <i>x</i> <r>  1,069</r> ops/sec <u>±</u><g>0.52</g><u>%</u> <i>(93 runs sampled)</i>
  xxhash-wasm#h32 <i>x</i> <r> 57,578</r> ops/sec <u>±</u><y>2.66</y><u>%</u> <i>(93 runs sampled)</i>
  xxhash-wasm#h64 <i>x</i> <r> 59,561</r> ops/sec <u>±</u><y>2.55</y><u>%</u> <i>(84 runs sampled)</i>
  <g>metrohash64</g>     <i>x</i> <g>109,880</g> ops/sec <u>±</u><g>0.13</g><u>%</u> <i>(96 runs sampled)</i>
  metrohash128    <i>x</i> <r>108,947</r> ops/sec <u>±</u><g>0.17</g><u>%</u> <i>(94 runs sampled)</i>
  farmhash#h32    <i>x</i> <r>108,886</r> ops/sec <u>±</u><g>0.22</g><u>%</u> <i>(93 runs sampled)</i>
  farmhash#h64    <i>x</i> <y>103,750</y> ops/sec <u>±</u><g>0.15</g><u>%</u> <i>(93 runs sampled)</i>
  md4             <i>x</i> <r> 47,425</r> ops/sec <u>±</u><g>0.66</g><u>%</u> <i>(92 runs sampled)</i>
  md5             <i>x</i> <r> 34,947</r> ops/sec <u>±</u><g>0.59</g><u>%</u> <i>(94 runs sampled)</i>
  sha1            <i>x</i> <r> 42,653</r> ops/sec <u>±</u><g>0.73</g><u>%</u> <i>(91 runs sampled)</i>

Benchmark 10000 bytes – Fastest is: metrohash64

  <c>11</c> tests completed.

  xxhashjs#h32    <i>x</i> <r>   445</r> ops/sec <u>±</u><g>1.98</g><u>%</u> <i>(82 runs sampled)</i>
  xxhashjs#h64    <i>x</i> <r>   113</r> ops/sec <u>±</u><g>1.62</g><u>%</u> <i>(71 runs sampled)</i>
  xxhash-wasm#h32 <i>x</i> <r> 6,446</r> ops/sec <u>±</u><g>1.60</g><u>%</u> <i>(86 runs sampled)</i>
  xxhash-wasm#h64 <i>x</i> <r> 6,929</r> ops/sec <u>±</u><g>1.55</g><u>%</u> <i>(87 runs sampled)</i>
  metrohash64     <i>x</i> <g>11,669</g> ops/sec <u>±</u><g>0.12</g><u>%</u> <i>(95 runs sampled)</i>
  <g>metrohash128</g>    <i>x</i> <g>11,710</g> ops/sec <u>±</u><g>0.15</g><u>%</u> <i>(96 runs sampled)</i>
  farmhash#h32    <i>x</i> <g>11,532</g> ops/sec <u>±</u><g>0.12</g><u>%</u> <i>(93 runs sampled)</i>
  farmhash#h64    <i>x</i> <g>11,433</g> ops/sec <u>±</u><g>0.10</g><u>%</u> <i>(95 runs sampled)</i>
  md4             <i>x</i> <r> 5,085</r> ops/sec <u>±</u><g>0.23</g><u>%</u> <i>(93 runs sampled)</i>
  md5             <i>x</i> <r> 3,687</r> ops/sec <u>±</u><g>0.05</g><u>%</u> <i>(96 runs sampled)</i>
  sha1            <i>x</i> <r> 4,551</r> ops/sec <u>±</u><g>0.20</g><u>%</u> <i>(95 runs sampled)</i>

Benchmark 100000 bytes – Fastest is: metrohash128

  <c>11</c> tests completed.

  xxhashjs#h32    <i>x</i> <r>29.48</r> ops/sec <u>±</u><y>2.27</y><u>%</u> <i>(51 runs sampled)</i>
  xxhashjs#h64    <i>x</i> <r>10.35</r> ops/sec <u>±</u><y>2.15</y><u>%</u> <i>(29 runs sampled)</i>
  xxhash-wasm#h32 <i>x</i> <r>  640</r> ops/sec <u>±</u><g>1.60</g><u>%</u> <i>(86 runs sampled)</i>
  xxhash-wasm#h64 <i>x</i> <r>  785</r> ops/sec <u>±</u><g>1.58</g><u>%</u> <i>(86 runs sampled)</i>
  <g>metrohash64</g>     <i>x</i> <g>1,178</g> ops/sec <u>±</u><g>0.11</g><u>%</u> <i>(94 runs sampled)</i>
  <g>metrohash128</g>    <i>x</i> <g>1,170</g> ops/sec <u>±</u><g>0.11</g><u>%</u> <i>(93 runs sampled)</i>
  <g>farmhash#h32</g>    <i>x</i> <g>1,162</g> ops/sec <u>±</u><g>0.09</g><u>%</u> <i>(94 runs sampled)</i>
  <g>farmhash#h64</g>    <i>x</i> <g>1,160</g> ops/sec <u>±</u><g>0.09</g><u>%</u> <i>(94 runs sampled)</i>
  md4             <i>x</i> <r>  515</r> ops/sec <u>±</u><g>0.05</g><u>%</u> <i>(93 runs sampled)</i>
  md5             <i>x</i> <r>  372</r> ops/sec <u>±</u><g>0.05</g><u>%</u> <i>(93 runs sampled)</i>
  sha1            <i>x</i> <r>  462</r> ops/sec <u>±</u><g>0.04</g><u>%</u> <i>(90 runs sampled)</i>

Benchmark 1000000 bytes – Fastest is: metrohash64

  <c>11</c> tests completed.

  xxhashjs#h32    <i>x</i> <r> 2.58</r> ops/sec <u>±</u><y>6.21</y><u>%</u> <i>(11 runs sampled)</i>
  xxhashjs#h64    <i>x</i> <r> 0.98</r> ops/sec <u>±</u><g>1.74</g><u>%</u> <i>(7 runs sampled)</i>
  xxhash-wasm#h32 <i>x</i> <r>57.36</r> ops/sec <u>±</u><y>2.28</y><u>%</u> <i>(59 runs sampled)</i>
  xxhash-wasm#h64 <i>x</i> <r>61.45</r> ops/sec <u>±</u><y>2.48</y><u>%</u> <i>(63 runs sampled)</i>
  <g>metrohash64</g>     <i>x</i> <g>  115</g> ops/sec <u>±</u><g>0.12</g><u>%</u> <i>(81 runs sampled)</i>
  <g>metrohash128</g>    <i>x</i> <g>  115</g> ops/sec <u>±</u><g>0.09</g><u>%</u> <i>(81 runs sampled)</i>
  <g>farmhash#h32</g>    <i>x</i> <g>  115</g> ops/sec <u>±</u><g>0.09</g><u>%</u> <i>(81 runs sampled)</i>
  <g>farmhash#h64</g>    <i>x</i> <g>  115</g> ops/sec <u>±</u><g>0.07</g><u>%</u> <i>(81 runs sampled)</i>
  md4             <i>x</i> <r>51.09</r> ops/sec <u>±</u><g>0.06</g><u>%</u> <i>(65 runs sampled)</i>
  md5             <i>x</i> <r>36.88</r> ops/sec <u>±</u><g>0.05</g><u>%</u> <i>(63 runs sampled)</i>
  sha1            <i>x</i> <r>45.79</r> ops/sec <u>±</u><g>0.07</g><u>%</u> <i>(59 runs sampled)</i>

Benchmark 10000000 bytes – Fastest is: metrohash128

  <c>11</c> tests completed.

  xxhashjs#h32    <i>x</i> <r>0.30</r> ops/sec <u>±</u><g>1.97</g><u>%</u> <i>(5 runs sampled)</i>
  xxhashjs#h64    <i>x</i> <r>0.10</r> ops/sec <u>±</u><y>2.84</y><u>%</u> <i>(5 runs sampled)</i>
  xxhash-wasm#h32 <i>x</i> <r>5.17</r> ops/sec <u>±</u><g>0.30</g><u>%</u> <i>(17 runs sampled)</i>
  xxhash-wasm#h64 <i>x</i> <r>5.48</r> ops/sec <u>±</u><g>0.17</g><u>%</u> <i>(18 runs sampled)</i>
  <g>metrohash64</g>     <i>x</i> <g>7.89</g> ops/sec <u>±</u><g>0.07</g><u>%</u> <i>(24 runs sampled)</i>
  metrohash128    <i>x</i> <g>7.88</g> ops/sec <u>±</u><g>0.06</g><u>%</u> <i>(24 runs sampled)</i>
  farmhash#h32    <i>x</i> <g>7.88</g> ops/sec <u>±</u><g>0.07</g><u>%</u> <i>(24 runs sampled)</i>
  farmhash#h64    <i>x</i> <g>7.88</g> ops/sec <u>±</u><g>0.06</g><u>%</u> <i>(24 runs sampled)</i>
  md4             <i>x</i> <r>4.25</r> ops/sec <u>±</u><g>0.05</g><u>%</u> <i>(15 runs sampled)</i>
  md5             <i>x</i> <r>3.21</r> ops/sec <u>±</u><g>0.07</g><u>%</u> <i>(12 runs sampled)</i>
  sha1            <i>x</i> <r>3.87</r> ops/sec <u>±</u><g>0.04</g><u>%</u> <i>(14 runs sampled)</i>

Benchmark 100000000 bytes – Fastest is: metrohash64</pre>
<pre style="left:1989px">wasm setup: 1.773ms
  <c>11</c> tests completed.

  xxhashjs#h32    <i>x</i> <r>  460,114</r> ops/sec <u>±</u><y>2.11</y><u>%</u> <i>(87 runs sampled)</i>
  xxhashjs#h64    <i>x</i> <r>    7,259</r> ops/sec <u>±</u><g>0.31</g><u>%</u> <i>(94 runs sampled)</i>
  xxhash-wasm#h32 <i>x</i> <r>  958,016</r> ops/sec <u>±</u><g>0.66</g><u>%</u> <i>(91 runs sampled)</i>
  xxhash-wasm#h64 <i>x</i> <r>  639,578</r> ops/sec <u>±</u><g>0.28</g><u>%</u> <i>(88 runs sampled)</i>
  <g>metrohash64</g>     <i>x</i> <g>3,896,566</g> ops/sec <u>±</u><g>0.53</g><u>%</u> <i>(93 runs sampled)</i>
  metrohash128    <i>x</i> <y>3,673,055</y> ops/sec <u>±</u><g>0.17</g><u>%</u> <i>(92 runs sampled)</i>
  farmhash#h32    <i>x</i> <r>2,781,389</r> ops/sec <u>±</u><g>0.27</g><u>%</u> <i>(93 runs sampled)</i>
  farmhash#h64    <i>x</i> <r>1,098,224</r> ops/sec <u>±</u><g>0.33</g><u>%</u> <i>(93 runs sampled)</i>
  md4             <i>x</i> <r>  720,110</r> ops/sec <u>±</u><y>3.08</y><u>%</u> <i>(82 runs sampled)</i>
  md5             <i>x</i> <r>  718,761</r> ops/sec <u>±</u><y>2.95</y><u>%</u> <i>(85 runs sampled)</i>
  sha1            <i>x</i> <r>  690,156</r> ops/sec <u>±</u><y>3.23</y><u>%</u> <i>(85 runs sampled)</i>

Benchmark 1 bytes – Fastest is: metrohash64

  <c>11</c> tests completed.

  xxhashjs#h32    <i>x</i> <r>  403,129</r> ops/sec <u>±</u><g>0.99</g><u>%</u> <i>(88 runs sampled)</i>
  xxhashjs#h64    <i>x</i> <r>    7,610</r> ops/sec <u>±</u><g>0.57</g><u>%</u> <i>(91 runs sampled)</i>
  xxhash-wasm#h32 <i>x</i> <r>  892,989</r> ops/sec <u>±</u><g>0.26</g><u>%</u> <i>(90 runs sampled)</i>
  xxhash-wasm#h64 <i>x</i> <r>  580,743</r> ops/sec <u>±</u><g>0.16</g><u>%</u> <i>(89 runs sampled)</i>
  <g>metrohash64</g>     <i>x</i> <g>3,596,209</g> ops/sec <u>±</u><g>0.57</g><u>%</u> <i>(95 runs sampled)</i>
  metrohash128    <i>x</i> <y>3,418,085</y> ops/sec <u>±</u><g>0.15</g><u>%</u> <i>(92 runs sampled)</i>
  farmhash#h32    <i>x</i> <g>3,354,059</g> ops/sec <u>±</u><g>0.25</g><u>%</u> <i>(95 runs sampled)</i>
  farmhash#h64    <i>x</i> <r>1,076,156</r> ops/sec <u>±</u><g>0.15</g><u>%</u> <i>(96 runs sampled)</i>
  md4             <i>x</i> <r>  719,596</r> ops/sec <u>±</u><y>3.09</y><u>%</u> <i>(85 runs sampled)</i>
  md5             <i>x</i> <r>  704,262</r> ops/sec <u>±</u><y>3.06</y><u>%</u> <i>(82 runs sampled)</i>
  sha1            <i>x</i> <r>  692,097</r> ops/sec <u>±</u><y>3.23</y><u>%</u> <i>(82 runs sampled)</i>

Benchmark 10 bytes – Fastest is: metrohash64

  <c>11</c> tests completed.

  xxhashjs#h32    <i>x</i> <r>  254,874</r> ops/sec <u>±</u><g>0.66</g><u>%</u> <i>(88 runs sampled)</i>
  xxhashjs#h64    <i>x</i> <r>    6,670</r> ops/sec <u>±</u><g>0.85</g><u>%</u> <i>(92 runs sampled)</i>
  xxhash-wasm#h32 <i>x</i> <r>  763,954</r> ops/sec <u>±</u><g>0.48</g><u>%</u> <i>(88 runs sampled)</i>
  xxhash-wasm#h64 <i>x</i> <r>  525,725</r> ops/sec <u>±</u><g>1.04</g><u>%</u> <i>(86 runs sampled)</i>
  <g>metrohash64</g>     <i>x</i> <g>2,441,619</g> ops/sec <u>±</u><g>0.17</g><u>%</u> <i>(95 runs sampled)</i>
  metrohash128    <i>x</i> <y>2,318,942</y> ops/sec <u>±</u><g>0.42</g><u>%</u> <i>(94 runs sampled)</i>
  farmhash#h32    <i>x</i> <r>2,101,922</r> ops/sec <u>±</u><g>0.29</g><u>%</u> <i>(92 runs sampled)</i>
  farmhash#h64    <i>x</i> <r>  973,598</r> ops/sec <u>±</u><g>0.16</g><u>%</u> <i>(94 runs sampled)</i>
  md4             <i>x</i> <r>  654,518</r> ops/sec <u>±</u><y>2.99</y><u>%</u> <i>(86 runs sampled)</i>
  md5             <i>x</i> <r>  612,847</r> ops/sec <u>±</u><y>3.09</y><u>%</u> <i>(84 runs sampled)</i>
  sha1            <i>x</i> <r>  604,076</r> ops/sec <u>±</u><y>3.15</y><u>%</u> <i>(85 runs sampled)</i>

Benchmark 100 bytes – Fastest is: metrohash64

  <c>11</c> tests completed.

  xxhashjs#h32    <i>x</i> <r> 59,147</r> ops/sec <u>±</u><g>0.30</g><u>%</u> <i>(91 runs sampled)</i>
  xxhashjs#h64    <i>x</i> <r>  4,570</r> ops/sec <u>±</u><g>0.67</g><u>%</u> <i>(94 runs sampled)</i>
  xxhash-wasm#h32 <i>x</i> <r>338,939</r> ops/sec <u>±</u><y>2.33</y><u>%</u> <i>(90 runs sampled)</i>
  xxhash-wasm#h64 <i>x</i> <r>307,096</r> ops/sec <u>±</u><g>1.87</g><u>%</u> <i>(83 runs sampled)</i>
  <g>metrohash64</g>     <i>x</i> <g>828,641</g> ops/sec <u>±</u><g>0.20</g><u>%</u> <i>(92 runs sampled)</i>
  metrohash128    <i>x</i> <r>823,351</r> ops/sec <u>±</u><g>0.20</g><u>%</u> <i>(93 runs sampled)</i>
  farmhash#h32    <i>x</i> <y>806,248</y> ops/sec <u>±</u><g>0.26</g><u>%</u> <i>(91 runs sampled)</i>
  farmhash#h64    <i>x</i> <r>532,268</r> ops/sec <u>±</u><g>0.33</g><u>%</u> <i>(93 runs sampled)</i>
  md4             <i>x</i> <r>295,714</r> ops/sec <u>±</u><g>1.93</g><u>%</u> <i>(88 runs sampled)</i>
  md5             <i>x</i> <r>241,211</r> ops/sec <u>±</u><g>1.77</g><u>%</u> <i>(92 runs sampled)</i>
  sha1            <i>x</i> <r>270,600</r> ops/sec <u>±</u><g>1.92</g><u>%</u> <i>(92 runs sampled)</i>

Benchmark 1000 bytes – Fastest is: metrohash64

  <c>11</c> tests completed.

  xxhashjs#h32    <i>x</i> <r>  7,856</r> ops/sec <u>±</u><g>0.48</g><u>%</u> <i>(88 runs sampled)</i>
  xxhashjs#h64    <i>x</i> <r>  1,105</r> ops/sec <u>±</u><g>0.60</g><u>%</u> <i>(92 runs sampled)</i>
  xxhash-wasm#h32 <i>x</i> <r> 56,967</r> ops/sec <u>±</u><y>2.70</y><u>%</u> <i>(88 runs sampled)</i>
  xxhash-wasm#h64 <i>x</i> <r> 59,676</r> ops/sec <u>±</u><y>2.51</y><u>%</u> <i>(83 runs sampled)</i>
  <g>metrohash64</g>     <i>x</i> <g>110,741</g> ops/sec <u>±</u><g>0.21</g><u>%</u> <i>(94 runs sampled)</i>
  metrohash128    <i>x</i> <r>109,539</r> ops/sec <u>±</u><g>0.29</g><u>%</u> <i>(94 runs sampled)</i>
  farmhash#h32    <i>x</i> <r>109,588</r> ops/sec <u>±</u><g>0.13</g><u>%</u> <i>(94 runs sampled)</i>
  farmhash#h64    <i>x</i> <y>104,064</y> ops/sec <u>±</u><g>0.17</g><u>%</u> <i>(93 runs sampled)</i>
  md4             <i>x</i> <r> 47,175</r> ops/sec <u>±</u><g>0.77</g><u>%</u> <i>(93 runs sampled)</i>
  md5             <i>x</i> <r> 34,967</r> ops/sec <u>±</u><g>0.30</g><u>%</u> <i>(93 runs sampled)</i>
  sha1            <i>x</i> <r> 42,681</r> ops/sec <u>±</u><g>0.57</g><u>%</u> <i>(95 runs sampled)</i>

Benchmark 10000 bytes – Fastest is: metrohash64

  <c>11</c> tests completed.

  xxhashjs#h32    <i>x</i> <r>   448</r> ops/sec <u>±</u><g>1.97</g><u>%</u> <i>(82 runs sampled)</i>
  xxhashjs#h64    <i>x</i> <r>   114</r> ops/sec <u>±</u><g>1.51</g><u>%</u> <i>(71 runs sampled)</i>
  xxhash-wasm#h32 <i>x</i> <r> 6,418</r> ops/sec <u>±</u><g>1.69</g><u>%</u> <i>(87 runs sampled)</i>
  xxhash-wasm#h64 <i>x</i> <r> 6,943</r> ops/sec <u>±</u><g>1.64</g><u>%</u> <i>(85 runs sampled)</i>
  <g>metrohash64</g>     <i>x</i> <g>11,595</g> ops/sec <u>±</u><g>0.07</g><u>%</u> <i>(94 runs sampled)</i>
  metrohash128    <i>x</i> <g>11,567</g> ops/sec <u>±</u><g>0.06</g><u>%</u> <i>(96 runs sampled)</i>
  farmhash#h32    <i>x</i> <g>11,568</g> ops/sec <u>±</u><g>0.10</g><u>%</u> <i>(96 runs sampled)</i>
  farmhash#h64    <i>x</i> <g>11,420</g> ops/sec <u>±</u><g>0.03</g><u>%</u> <i>(97 runs sampled)</i>
  md4             <i>x</i> <r> 5,079</r> ops/sec <u>±</u><g>0.09</g><u>%</u> <i>(94 runs sampled)</i>
  md5             <i>x</i> <r> 3,681</r> ops/sec <u>±</u><g>0.06</g><u>%</u> <i>(95 runs sampled)</i>
  sha1            <i>x</i> <r> 4,558</r> ops/sec <u>±</u><g>0.04</g><u>%</u> <i>(95 runs sampled)</i>

Benchmark 100000 bytes – Fastest is: metrohash64

  <c>11</c> tests completed.

  xxhashjs#h32    <i>x</i> <r>29.49</r> ops/sec <u>±</u><y>2.22</y><u>%</u> <i>(51 runs sampled)</i>
  xxhashjs#h64    <i>x</i> <r>10.19</r> ops/sec <u>±</u><y>2.38</y><u>%</u> <i>(30 runs sampled)</i>
  xxhash-wasm#h32 <i>x</i> <r>  648</r> ops/sec <u>±</u><g>1.73</g><u>%</u> <i>(86 runs sampled)</i>
  xxhash-wasm#h64 <i>x</i> <r>  706</r> ops/sec <u>±</u><g>1.59</g><u>%</u> <i>(87 runs sampled)</i>
  <g>metrohash64</g>     <i>x</i> <g>1,165</g> ops/sec <u>±</u><g>0.08</g><u>%</u> <i>(94 runs sampled)</i>
  <g>metrohash128</g>    <i>x</i> <g>1,162</g> ops/sec <u>±</u><g>0.08</g><u>%</u> <i>(94 runs sampled)</i>
  <g>farmhash#h32</g>    <i>x</i> <g>1,161</g> ops/sec <u>±</u><g>0.08</g><u>%</u> <i>(94 runs sampled)</i>
  <g>farmhash#h64</g>    <i>x</i> <g>1,168</g> ops/sec <u>±</u><g>0.08</g><u>%</u> <i>(94 runs sampled)</i>
  md4             <i>x</i> <r>  514</r> ops/sec <u>±</u><g>0.05</g><u>%</u> <i>(93 runs sampled)</i>
  md5             <i>x</i> <r>  372</r> ops/sec <u>±</u><g>0.05</g><u>%</u> <i>(93 runs sampled)</i>
  sha1            <i>x</i> <r>  460</r> ops/sec <u>±</u><g>0.05</g><u>%</u> <i>(90 runs sampled)</i>

Benchmark 1000000 bytes – Fastest is: farmhash#h64

  <c>11</c> tests completed.

  xxhashjs#h32    <i>x</i> <r> 2.58</r> ops/sec <u>±</u><y>3.79</y><u>%</u> <i>(11 runs sampled)</i>
  xxhashjs#h64    <i>x</i> <r> 1.01</r> ops/sec <u>±</u><g>0.15</g><u>%</u> <i>(7 runs sampled)</i>
  xxhash-wasm#h32 <i>x</i> <r>56.88</r> ops/sec <u>±</u><y>2.47</y><u>%</u> <i>(59 runs sampled)</i>
  xxhash-wasm#h64 <i>x</i> <r>61.38</r> ops/sec <u>±</u><y>2.54</y><u>%</u> <i>(63 runs sampled)</i>
  <g>metrohash64</g>     <i>x</i> <g>  115</g> ops/sec <u>±</u><g>0.08</g><u>%</u> <i>(81 runs sampled)</i>
  <g>metrohash128</g>    <i>x</i> <g>  115</g> ops/sec <u>±</u><g>0.08</g><u>%</u> <i>(81 runs sampled)</i>
  <g>farmhash#h32</g>    <i>x</i> <g>  115</g> ops/sec <u>±</u><g>0.07</g><u>%</u> <i>(81 runs sampled)</i>
  <g>farmhash#h64</g>    <i>x</i> <g>  115</g> ops/sec <u>±</u><g>0.08</g><u>%</u> <i>(81 runs sampled)</i>
  md4             <i>x</i> <r>51.08</r> ops/sec <u>±</u><g>0.06</g><u>%</u> <i>(65 runs sampled)</i>
  md5             <i>x</i> <r>36.94</r> ops/sec <u>±</u><g>0.05</g><u>%</u> <i>(63 runs sampled)</i>
  sha1            <i>x</i> <r>45.73</r> ops/sec <u>±</u><g>0.05</g><u>%</u> <i>(59 runs sampled)</i>

Benchmark 10000000 bytes – Fastest is: farmhash#h32

  <c>11</c> tests completed.

  xxhashjs#h32    <i>x</i> <r>0.30</r> ops/sec <u>±</u><y>3.30</y><u>%</u> <i>(5 runs sampled)</i>
  xxhashjs#h64    <i>x</i> <r>0.10</r> ops/sec <u>±</u><y>2.06</y><u>%</u> <i>(5 runs sampled)</i>
  xxhash-wasm#h32 <i>x</i> <r>5.20</r> ops/sec <u>±</u><g>0.66</g><u>%</u> <i>(17 runs sampled)</i>
  xxhash-wasm#h64 <i>x</i> <r>5.49</r> ops/sec <u>±</u><g>0.22</g><u>%</u> <i>(18 runs sampled)</i>
  <g>metrohash64</g>     <i>x</i> <g>7.90</g> ops/sec <u>±</u><g>0.07</g><u>%</u> <i>(24 runs sampled)</i>
  metrohash128    <i>x</i> <g>7.90</g> ops/sec <u>±</u><g>0.08</g><u>%</u> <i>(24 runs sampled)</i>
  farmhash#h32    <i>x</i> <g>7.89</g> ops/sec <u>±</u><g>0.08</g><u>%</u> <i>(24 runs sampled)</i>
  farmhash#h64    <i>x</i> <g>7.90</g> ops/sec <u>±</u><g>0.05</g><u>%</u> <i>(24 runs sampled)</i>
  md4             <i>x</i> <r>4.25</r> ops/sec <u>±</u><g>0.06</g><u>%</u> <i>(15 runs sampled)</i>
  md5             <i>x</i> <r>3.22</r> ops/sec <u>±</u><g>0.04</g><u>%</u> <i>(12 runs sampled)</i>
  sha1            <i>x</i> <r>3.87</r> ops/sec <u>±</u><g>0.07</g><u>%</u> <i>(14 runs sampled)</i>

Benchmark 100000000 bytes – Fastest is: metrohash64</pre>
<pre style="left:2648px">wasm setup: 1.962ms
  <c>11</c> tests completed.

  xxhashjs#h32    <i>x</i> <r>  460,395</r> ops/sec <u>±</u><g>1.31</g><u>%</u> <i>(85 runs sampled)</i>
  xxhashjs#h64    <i>x</i> <r>    8,781</r> ops/sec <u>±</u><g>0.52</g><u>%</u> <i>(89 runs sampled)</i>
  xxhash-wasm#h32 <i>x</i> <r>  876,009</r> ops/sec <u>±</u><g>0.82</g><u>%</u> <i>(89 runs sampled)</i>
  xxhash-wasm#h64 <i>x</i> <r>  582,757</r> ops/sec <u>±</u><g>0.28</g><u>%</u> <i>(88 runs sampled)</i>
  <g>metrohash64</g>     <i>x</i> <g>3,885,012</g> ops/sec <u>±</u><g>0.50</g><u>%</u> <i>(95 runs sampled)</i>
  metrohash128    <i>x</i> <y>3,652,253</y> ops/sec <u>±</u><g>0.24</g><u>%</u> <i>(95 runs sampled)</i>
  farmhash#h32    <i>x</i> <r>2,759,497</r> ops/sec <u>±</u><g>0.37</g><u>%</u> <i>(93 runs sampled)</i>
  farmhash#h64    <i>x</i> <r>1,122,173</r> ops/sec <u>±</u><g>0.21</g><u>%</u> <i>(90 runs sampled)</i>
  md4             <i>x</i> <r>  731,921</r> ops/sec <u>±</u><y>3.04</y><u>%</u> <i>(83 runs sampled)</i>
  md5             <i>x</i> <r>  716,422</r> ops/sec <u>±</u><y>3.03</y><u>%</u> <i>(85 runs sampled)</i>
  sha1            <i>x</i> <r>  698,965</r> ops/sec <u>±</u><y>3.13</y><u>%</u> <i>(80 runs sampled)</i>

Benchmark 1 bytes – Fastest is: metrohash64

  <c>11</c> tests completed.

  xxhashjs#h32    <i>x</i> <r>  421,828</r> ops/sec <u>±</u><g>0.71</g><u>%</u> <i>(90 runs sampled)</i>
  xxhashjs#h64    <i>x</i> <r>    8,038</r> ops/sec <u>±</u><g>0.86</g><u>%</u> <i>(89 runs sampled)</i>
  xxhash-wasm#h32 <i>x</i> <r>  842,081</r> ops/sec <u>±</u><g>0.85</g><u>%</u> <i>(89 runs sampled)</i>
  xxhash-wasm#h64 <i>x</i> <r>  578,695</r> ops/sec <u>±</u><g>0.21</g><u>%</u> <i>(87 runs sampled)</i>
  <g>metrohash64</g>     <i>x</i> <g>3,656,087</g> ops/sec <u>±</u><g>0.61</g><u>%</u> <i>(93 runs sampled)</i>
  metrohash128    <i>x</i> <y>3,445,090</y> ops/sec <u>±</u><g>0.18</g><u>%</u> <i>(93 runs sampled)</i>
  farmhash#h32    <i>x</i> <g>3,374,790</g> ops/sec <u>±</u><g>0.23</g><u>%</u> <i>(95 runs sampled)</i>
  farmhash#h64    <i>x</i> <r>1,079,790</r> ops/sec <u>±</u><g>0.17</g><u>%</u> <i>(91 runs sampled)</i>
  md4             <i>x</i> <r>  729,254</r> ops/sec <u>±</u><y>3.12</y><u>%</u> <i>(85 runs sampled)</i>
  md5             <i>x</i> <r>  710,180</r> ops/sec <u>±</u><y>3.00</y><u>%</u> <i>(86 runs sampled)</i>
  sha1            <i>x</i> <r>  684,793</r> ops/sec <u>±</u><y>3.22</y><u>%</u> <i>(81 runs sampled)</i>

Benchmark 10 bytes – Fastest is: metrohash64

  <c>11</c> tests completed.

  xxhashjs#h32    <i>x</i> <r>  256,553</r> ops/sec <u>±</u><g>0.57</g><u>%</u> <i>(89 runs sampled)</i>
  xxhashjs#h64    <i>x</i> <r>    7,600</r> ops/sec <u>±</u><g>0.73</g><u>%</u> <i>(91 runs sampled)</i>
  xxhash-wasm#h32 <i>x</i> <r>  728,357</r> ops/sec <u>±</u><g>0.59</g><u>%</u> <i>(89 runs sampled)</i>
  xxhash-wasm#h64 <i>x</i> <r>  511,356</r> ops/sec <u>±</u><g>1.04</g><u>%</u> <i>(84 runs sampled)</i>
  <g>metrohash64</g>     <i>x</i> <g>2,528,625</g> ops/sec <u>±</u><g>0.21</g><u>%</u> <i>(94 runs sampled)</i>
  metrohash128    <i>x</i> <y>2,414,960</y> ops/sec <u>±</u><g>0.61</g><u>%</u> <i>(95 runs sampled)</i>
  farmhash#h32    <i>x</i> <r>2,130,405</r> ops/sec <u>±</u><g>0.23</g><u>%</u> <i>(95 runs sampled)</i>
  farmhash#h64    <i>x</i> <r>  997,410</r> ops/sec <u>±</u><g>0.48</g><u>%</u> <i>(96 runs sampled)</i>
  md4             <i>x</i> <r>  653,963</r> ops/sec <u>±</u><y>2.97</y><u>%</u> <i>(85 runs sampled)</i>
  md5             <i>x</i> <r>  617,588</r> ops/sec <u>±</u><y>3.04</y><u>%</u> <i>(86 runs sampled)</i>
  sha1            <i>x</i> <r>  612,712</r> ops/sec <u>±</u><y>3.04</y><u>%</u> <i>(86 runs sampled)</i>

Benchmark 100 bytes – Fastest is: metrohash64

  <c>11</c> tests completed.

  xxhashjs#h32    <i>x</i> <r> 59,241</r> ops/sec <u>±</u><g>0.33</g><u>%</u> <i>(92 runs sampled)</i>
  xxhashjs#h64    <i>x</i> <r>  4,364</r> ops/sec <u>±</u><g>0.64</g><u>%</u> <i>(92 runs sampled)</i>
  xxhash-wasm#h32 <i>x</i> <r>327,996</r> ops/sec <u>±</u><y>2.34</y><u>%</u> <i>(91 runs sampled)</i>
  xxhash-wasm#h64 <i>x</i> <r>308,082</r> ops/sec <u>±</u><g>1.49</g><u>%</u> <i>(83 runs sampled)</i>
  <g>metrohash64</g>     <i>x</i> <g>805,923</g> ops/sec <u>±</u><g>0.56</g><u>%</u> <i>(94 runs sampled)</i>
  metrohash128    <i>x</i> <r>799,993</r> ops/sec <u>±</u><g>0.35</g><u>%</u> <i>(95 runs sampled)</i>
  farmhash#h32    <i>x</i> <y>745,969</y> ops/sec <u>±</u><g>0.20</g><u>%</u> <i>(91 runs sampled)</i>
  farmhash#h64    <i>x</i> <r>534,778</r> ops/sec <u>±</u><g>0.28</g><u>%</u> <i>(96 runs sampled)</i>
  md4             <i>x</i> <r>297,475</r> ops/sec <u>±</u><g>1.79</g><u>%</u> <i>(92 runs sampled)</i>
  md5             <i>x</i> <r>240,653</r> ops/sec <u>±</u><g>1.79</g><u>%</u> <i>(92 runs sampled)</i>
  sha1            <i>x</i> <r>271,637</r> ops/sec <u>±</u><g>1.86</g><u>%</u> <i>(90 runs sampled)</i>

Benchmark 1000 bytes – Fastest is: metrohash64

  <c>11</c> tests completed.

  xxhashjs#h32    <i>x</i> <r>  7,880</r> ops/sec <u>±</u><g>0.52</g><u>%</u> <i>(93 runs sampled)</i>
  xxhashjs#h64    <i>x</i> <r>  1,078</r> ops/sec <u>±</u><g>0.17</g><u>%</u> <i>(94 runs sampled)</i>
  xxhash-wasm#h32 <i>x</i> <r> 57,383</r> ops/sec <u>±</u><y>2.57</y><u>%</u> <i>(85 runs sampled)</i>
  xxhash-wasm#h64 <i>x</i> <r> 59,543</r> ops/sec <u>±</u><y>2.56</y><u>%</u> <i>(81 runs sampled)</i>
  <g>metrohash64</g>     <i>x</i> <g>110,656</g> ops/sec <u>±</u><g>0.12</g><u>%</u> <i>(95 runs sampled)</i>
  metrohash128    <i>x</i> <r>109,574</r> ops/sec <u>±</u><g>0.22</g><u>%</u> <i>(94 runs sampled)</i>
  farmhash#h32    <i>x</i> <r>108,352</r> ops/sec <u>±</u><g>0.17</g><u>%</u> <i>(94 runs sampled)</i>
  farmhash#h64    <i>x</i> <y>102,471</y> ops/sec <u>±</u><g>0.22</g><u>%</u> <i>(94 runs sampled)</i>
  md4             <i>x</i> <r> 47,453</r> ops/sec <u>±</u><g>0.54</g><u>%</u> <i>(92 runs sampled)</i>
  md5             <i>x</i> <r> 34,980</r> ops/sec <u>±</u><g>0.36</g><u>%</u> <i>(94 runs sampled)</i>
  sha1            <i>x</i> <r> 42,464</r> ops/sec <u>±</u><g>0.77</g><u>%</u> <i>(91 runs sampled)</i>

Benchmark 10000 bytes – Fastest is: metrohash64

  <c>11</c> tests completed.

  xxhashjs#h32    <i>x</i> <r>   446</r> ops/sec <u>±</u><y>2.04</y><u>%</u> <i>(81 runs sampled)</i>
  xxhashjs#h64    <i>x</i> <r>   113</r> ops/sec <u>±</u><g>1.58</g><u>%</u> <i>(80 runs sampled)</i>
  xxhash-wasm#h32 <i>x</i> <r> 6,397</r> ops/sec <u>±</u><g>1.65</g><u>%</u> <i>(86 runs sampled)</i>
  xxhash-wasm#h64 <i>x</i> <r> 6,904</r> ops/sec <u>±</u><g>1.58</g><u>%</u> <i>(86 runs sampled)</i>
  <g>metrohash64</g>     <i>x</i> <g>11,576</g> ops/sec <u>±</u><g>0.09</g><u>%</u> <i>(96 runs sampled)</i>
  metrohash128    <i>x</i> <g>11,544</g> ops/sec <u>±</u><g>0.16</g><u>%</u> <i>(95 runs sampled)</i>
  farmhash#h32    <i>x</i> <g>11,561</g> ops/sec <u>±</u><g>0.09</g><u>%</u> <i>(95 runs sampled)</i>
  farmhash#h64    <i>x</i> <g>11,479</g> ops/sec <u>±</u><g>0.15</g><u>%</u> <i>(95 runs sampled)</i>
  md4             <i>x</i> <r> 5,069</r> ops/sec <u>±</u><g>0.05</g><u>%</u> <i>(95 runs sampled)</i>
  md5             <i>x</i> <r> 3,686</r> ops/sec <u>±</u><g>0.05</g><u>%</u> <i>(96 runs sampled)</i>
  sha1            <i>x</i> <r> 4,560</r> ops/sec <u>±</u><g>0.22</g><u>%</u> <i>(95 runs sampled)</i>

Benchmark 100000 bytes – Fastest is: metrohash64

  <c>11</c> tests completed.

  xxhashjs#h32    <i>x</i> <r>29.37</r> ops/sec <u>±</u><y>2.37</y><u>%</u> <i>(51 runs sampled)</i>
  xxhashjs#h64    <i>x</i> <r>10.59</r> ops/sec <u>±</u><g>0.75</g><u>%</u> <i>(30 runs sampled)</i>
  xxhash-wasm#h32 <i>x</i> <r>  648</r> ops/sec <u>±</u><g>1.69</g><u>%</u> <i>(87 runs sampled)</i>
  xxhash-wasm#h64 <i>x</i> <r>  706</r> ops/sec <u>±</u><g>1.56</g><u>%</u> <i>(86 runs sampled)</i>
  <g>metrohash64</g>     <i>x</i> <g>1,165</g> ops/sec <u>±</u><g>0.09</g><u>%</u> <i>(94 runs sampled)</i>
  <g>metrohash128</g>    <i>x</i> <g>1,164</g> ops/sec <u>±</u><g>0.06</g><u>%</u> <i>(94 runs sampled)</i>
  <g>farmhash#h32</g>    <i>x</i> <g>1,159</g> ops/sec <u>±</u><g>0.06</g><u>%</u> <i>(94 runs sampled)</i>
  <g>farmhash#h64</g>    <i>x</i> <g>1,163</g> ops/sec <u>±</u><g>0.16</g><u>%</u> <i>(94 runs sampled)</i>
  md4             <i>x</i> <r>  514</r> ops/sec <u>±</u><g>0.05</g><u>%</u> <i>(93 runs sampled)</i>
  md5             <i>x</i> <r>  372</r> ops/sec <u>±</u><g>0.05</g><u>%</u> <i>(93 runs sampled)</i>
  sha1            <i>x</i> <r>  460</r> ops/sec <u>±</u><g>0.05</g><u>%</u> <i>(90 runs sampled)</i>

Benchmark 1000000 bytes – Fastest is: farmhash#h64

  <c>11</c> tests completed.

  xxhashjs#h32    <i>x</i> <r> 2.70</r> ops/sec <u>±</u><y>6.37</y><u>%</u> <i>(11 runs sampled)</i>
  xxhashjs#h64    <i>x</i> <r> 1.04</r> ops/sec <u>±</u><y>2.09</y><u>%</u> <i>(7 runs sampled)</i>
  xxhash-wasm#h32 <i>x</i> <r>57.80</r> ops/sec <u>±</u><y>2.32</y><u>%</u> <i>(59 runs sampled)</i>
  xxhash-wasm#h64 <i>x</i> <r>61.41</r> ops/sec <u>±</u><y>2.46</y><u>%</u> <i>(63 runs sampled)</i>
  <g>metrohash64</g>     <i>x</i> <g>  115</g> ops/sec <u>±</u><g>0.20</g><u>%</u> <i>(81 runs sampled)</i>
  <g>metrohash128</g>    <i>x</i> <g>  115</g> ops/sec <u>±</u><g>0.08</g><u>%</u> <i>(81 runs sampled)</i>
  <g>farmhash#h32</g>    <i>x</i> <g>  115</g> ops/sec <u>±</u><g>0.07</g><u>%</u> <i>(81 runs sampled)</i>
  <g>farmhash#h64</g>    <i>x</i> <g>  115</g> ops/sec <u>±</u><g>0.08</g><u>%</u> <i>(81 runs sampled)</i>
  md4             <i>x</i> <r>51.08</r> ops/sec <u>±</u><g>0.06</g><u>%</u> <i>(65 runs sampled)</i>
  md5             <i>x</i> <r>36.93</r> ops/sec <u>±</u><g>0.05</g><u>%</u> <i>(63 runs sampled)</i>
  sha1            <i>x</i> <r>45.77</r> ops/sec <u>±</u><g>0.06</g><u>%</u> <i>(59 runs sampled)</i>

Benchmark 10000000 bytes – Fastest is: farmhash#h64

  <c>11</c> tests completed.

  xxhashjs#h32    <i>x</i> <r>0.30</r> ops/sec <u>±</u><g>1.80</g><u>%</u> <i>(5 runs sampled)</i>
  xxhashjs#h64    <i>x</i> <r>0.11</r> ops/sec <u>±</u><y>2.09</y><u>%</u> <i>(5 runs sampled)</i>
  xxhash-wasm#h32 <i>x</i> <r>5.20</r> ops/sec <u>±</u><g>0.50</g><u>%</u> <i>(17 runs sampled)</i>
  xxhash-wasm#h64 <i>x</i> <r>5.50</r> ops/sec <u>±</u><g>0.19</g><u>%</u> <i>(18 runs sampled)</i>
  metrohash64     <i>x</i> <g>7.92</g> ops/sec <u>±</u><g>0.11</g><u>%</u> <i>(24 runs sampled)</i>
  <g>metrohash128</g>    <i>x</i> <g>7.92</g> ops/sec <u>±</u><g>0.05</g><u>%</u> <i>(24 runs sampled)</i>
  farmhash#h32    <i>x</i> <g>7.90</g> ops/sec <u>±</u><g>0.09</g><u>%</u> <i>(24 runs sampled)</i>
  farmhash#h64    <i>x</i> <g>7.90</g> ops/sec <u>±</u><g>0.07</g><u>%</u> <i>(24 runs sampled)</i>
  md4             <i>x</i> <r>4.26</r> ops/sec <u>±</u><g>0.05</g><u>%</u> <i>(15 runs sampled)</i>
  md5             <i>x</i> <r>3.22</r> ops/sec <u>±</u><g>0.05</g><u>%</u> <i>(13 runs sampled)</i>
  sha1            <i>x</i> <r>3.88</r> ops/sec <u>±</u><g>0.04</g><u>%</u> <i>(14 runs sampled)</i>

Benchmark 100000000 bytes – Fastest is: metrohash128</pre>
</body></html>
